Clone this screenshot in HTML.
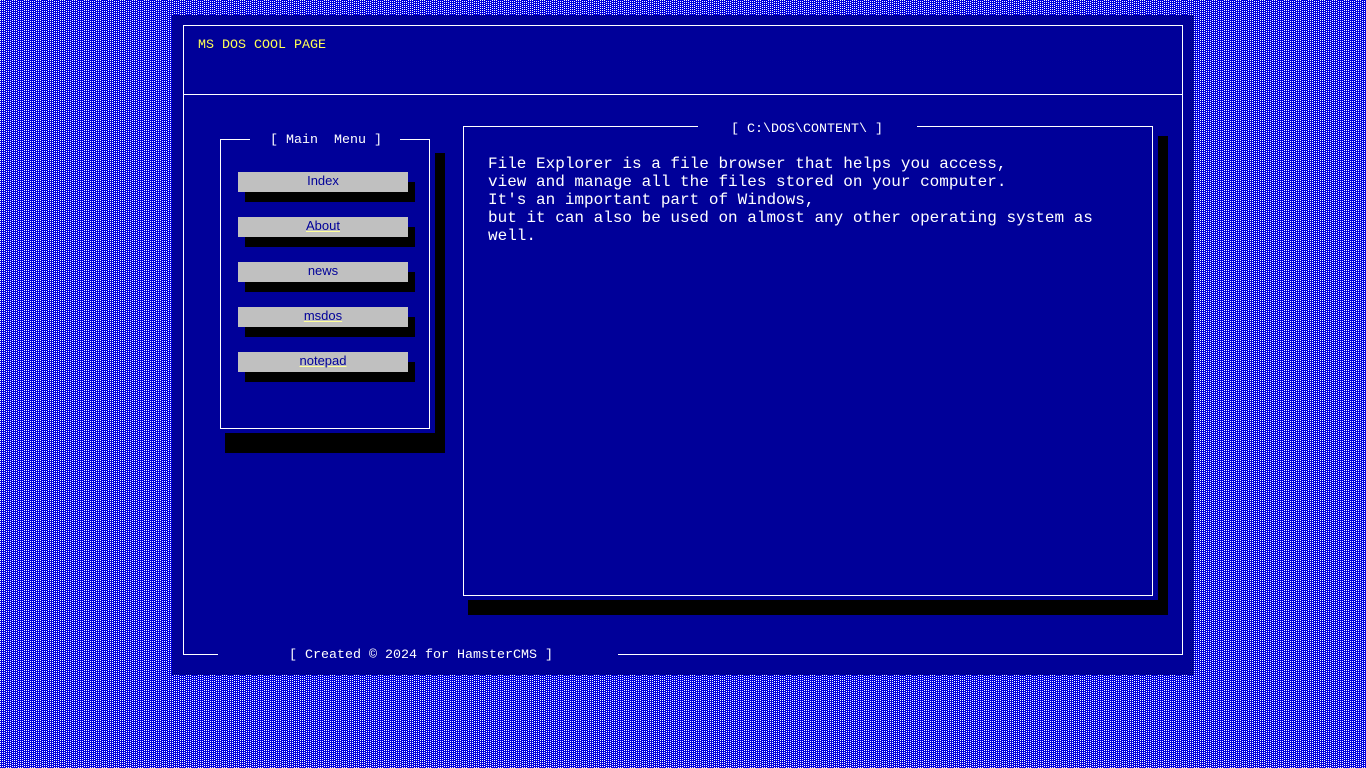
<!DOCTYPE html>
<html><head><meta charset="utf-8"><title>MS DOS COOL PAGE</title>
<style>
html,body{margin:0;padding:0;width:1366px;height:768px;overflow:hidden;background:#0000dd}
div,svg{position:absolute}
.t{font-family:"Liberation Mono",monospace;font-size:13.33px;line-height:16px;color:#fff;white-space:pre}
.w{background:#fff}
.k{background:#000}
.b{left:238px;width:170px;height:20px;background:#c0c0c0}
.s{left:245px;width:170px;height:20px;background:#000}
.l{left:238px;width:170px;text-align:center;font:13px/18px "Liberation Sans",sans-serif;color:#000099}
.l span{display:inline-block;line-height:15px}
.u span{text-decoration:underline;text-decoration-color:#ffff99}
</style></head><body>
<svg width="1366" height="768" style="left:0;top:0"><defs><pattern id="p" width="12" height="2" patternUnits="userSpaceOnUse"><rect width="12" height="2" fill="#0000dd"/>
<g fill="#fff"><rect x="0" y="0" width="1" height="1"/><rect x="2" y="0" width="1" height="1"/><rect x="4" y="0" width="1" height="1"/><rect x="6" y="1" width="1" height="1"/><rect x="8" y="1" width="1" height="1"/><rect x="10" y="1" width="1" height="1"/></g></pattern></defs><rect width="1366" height="768" fill="url(#p)"/></svg>
<div style="left:172px;top:15px;width:1022px;height:660px;background:#000099"></div>

<!-- outer frame -->
<div class="w" style="left:183px;top:25px;width:1000px;height:1px"></div>
<div class="w" style="left:183px;top:25px;width:1px;height:630px"></div>
<div class="w" style="left:1182px;top:25px;width:1px;height:630px"></div>
<div class="w" style="left:183px;top:94px;width:1000px;height:1px"></div>
<div class="w" style="left:183px;top:654px;width:35px;height:1px"></div>
<div class="w" style="left:618px;top:654px;width:565px;height:1px"></div>
<div class="t" style="left:198px;top:38px;color:#ffff55">MS DOS COOL PAGE</div>
<div class="t" style="left:289px;top:648px">[ Created © 2024 for HamsterCMS ]</div>

<!-- menu -->
<div class="k" style="left:435px;top:153px;width:10px;height:300px"></div>
<div class="k" style="left:225px;top:433px;width:220px;height:20px"></div>
<div class="w" style="left:220px;top:139px;width:30px;height:1px"></div>
<div class="w" style="left:400px;top:139px;width:30px;height:1px"></div>
<div class="w" style="left:220px;top:139px;width:1px;height:290px"></div>
<div class="w" style="left:429px;top:139px;width:1px;height:290px"></div>
<div class="w" style="left:220px;top:428px;width:210px;height:1px"></div>
<div class="t" style="left:270px;top:133px">[ Main  Menu ]</div>

<div class="s" style="top:182px"></div><div class="b" style="top:172px"></div><div class="l" style="top:172px"><span>Index</span></div>
<div class="s" style="top:227px"></div><div class="b" style="top:217px"></div><div class="l u" style="top:217px"><span>About</span></div>
<div class="s" style="top:272px"></div><div class="b" style="top:262px"></div><div class="l" style="top:262px"><span>news</span></div>
<div class="s" style="top:317px"></div><div class="b" style="top:307px"></div><div class="l u" style="top:307px"><span>msdos</span></div>
<div class="s" style="top:362px"></div><div class="b" style="top:352px"></div><div class="l u" style="top:352px"><span>notepad</span></div>

<!-- content -->
<div class="k" style="left:1158px;top:136px;width:10px;height:479px"></div>
<div class="k" style="left:468px;top:600px;width:700px;height:15px"></div>
<div class="w" style="left:463px;top:126px;width:235px;height:1px"></div>
<div class="w" style="left:917px;top:126px;width:236px;height:1px"></div>
<div class="w" style="left:463px;top:126px;width:1px;height:470px"></div>
<div class="w" style="left:1152px;top:126px;width:1px;height:470px"></div>
<div class="w" style="left:463px;top:595px;width:690px;height:1px"></div>
<div class="t" style="left:731px;top:122px">[ C:\DOS\CONTENT\ ]</div>
<div class="t" style="left:488px;top:155px;font-size:16px;line-height:18px">File Explorer is a file browser that helps you access,
view and manage all the files stored on your computer.
It's an important part of Windows,
but it can also be used on almost any other operating system as
well.</div>
</body></html>
